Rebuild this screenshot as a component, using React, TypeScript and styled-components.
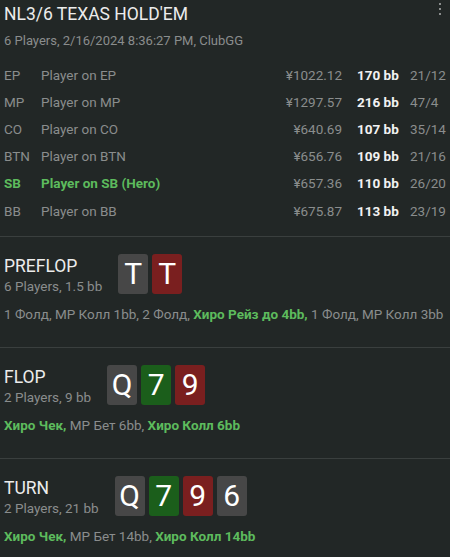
import styled, { createGlobalStyle } from "styled-components";

const GlobalStyle = createGlobalStyle`
  html, body {
    margin: 0;
    padding: 0;
    background: #222726;
  }
  body {
    font-family: Roboto, "Noto Sans", sans-serif;
    color: #e6e6e6;
  }
`;

const Page = styled.div`
  width: 450px;
  min-height: 557px;
  background: #222726;
  box-sizing: border-box;
`;

const Header = styled.header`
  position: relative;
  padding: 2px 4px 0 4px;
`;

const Title = styled.h1`
  margin: 0;
  font-size: 17.5px;
  font-weight: 400;
  line-height: 24px;
  color: #ececec;
`;

const Sub = styled.div`
  font-size: 13px;
  line-height: 18px;
  color: #8a8d8d;
  margin-top: 6px;
`;

const MenuButton = styled.button`
  position: absolute;
  top: 2px;
  right: 8px;
  border: 0;
  background: none;
  padding: 0;
  display: flex;
`;

const Players = styled.div`
  display: grid;
  grid-template-columns: 37px 1fr auto 68px 36px;
  grid-auto-rows: 27.2px;
  align-items: center;
  padding: 11px 4px 12px 4px;
  font-size: 13.5px;
`;

const Cell = styled.span<{ $hero?: boolean; $right?: boolean }>`
  color: ${(p) => (p.$hero ? "#5dbb5d" : "#8a8d8d")};
  font-weight: ${(p) => (p.$hero ? 700 : 400)};
  text-align: ${(p) => (p.$right ? "right" : "left")};
  white-space: nowrap;
`;

const BB = styled(Cell)`
  padding-left: 15px;
  color: #f2f2f2;
  font-weight: 700;
`;

const Street = styled.section`
  border-top: 1px solid #3a3f3e;
  padding: 17px 4px 24px 4px;
`;

const StreetHead = styled.div`
  display: flex;
  align-items: flex-start;
  gap: 16px;
`;

const StreetInfo = styled.div`
  display: flex;
  flex-direction: column;
  padding-top: 1px;
`;

const StreetName = styled.div`
  font-size: 17.5px;
  line-height: 22px;
  color: #ececec;
`;

const StreetSub = styled.div`
  font-size: 13.5px;
  line-height: 18px;
  color: #8a8d8d;
`;

const Cards = styled.div`
  display: flex;
  gap: 4px;
`;

const Card = styled.div<{ $suit: "g" | "r" | "n" }>`
  width: 30px;
  height: 40px;
  border-radius: 3px;
  background: ${(p) => (p.$suit === "r" ? "#7a1f1f" : p.$suit === "g" ? "#1b5e1b" : "#474747")};
  color: #ffffff;
  font-size: 30px;
  line-height: 40px;
  text-align: center;
`;

const Actions = styled.div`
  margin-top: 10px;
  font-size: 13.5px;
  line-height: 18px;
  color: #8a8d8d;
  white-space: nowrap;
`;

const Hero = styled.span`
  color: #5dbb5d;
  font-weight: 700;
`;

type Suit = "g" | "r" | "n";

interface IPlayer {
  pos: string;
  name: string;
  stack: string;
  bb: string;
  stat: string;
  hero?: boolean;
}

const players: IPlayer[] = [
  { pos: "EP", name: "Player on EP", stack: "¥1022.12", bb: "170 bb", stat: "21/12" },
  { pos: "MP", name: "Player on MP", stack: "¥1297.57", bb: "216 bb", stat: "47/4" },
  { pos: "CO", name: "Player on CO", stack: "¥640.69", bb: "107 bb", stat: "35/14" },
  { pos: "BTN", name: "Player on BTN", stack: "¥656.76", bb: "109 bb", stat: "21/16" },
  { pos: "SB", name: "Player on SB (Hero)", stack: "¥657.36", bb: "110 bb", stat: "26/20", hero: true },
  { pos: "BB", name: "Player on BB", stack: "¥675.87", bb: "113 bb", stat: "23/19" },
];

interface IStreet {
  name: string;
  sub: string;
  cards: [string, Suit][];
  actions: [string, boolean][];
}

const streets: IStreet[] = [
  {
    name: "PREFLOP",
    sub: "6 Players, 1.5 bb",
    cards: [
      ["T", "n"],
      ["T", "r"],
    ],
    actions: [
      ["1 Фолд, MP Колл 1bb, 2 Фолд, ", false],
      ["Хиро Рейз до 4bb,", true],
      [" 1 Фолд, MP Колл 3bb", false],
    ],
  },
  {
    name: "FLOP",
    sub: "2 Players, 9 bb",
    cards: [
      ["Q", "n"],
      ["7", "g"],
      ["9", "r"],
    ],
    actions: [
      ["Хиро Чек,", true],
      [" MP Бет 6bb, ", false],
      ["Хиро Колл 6bb", true],
    ],
  },
  {
    name: "TURN",
    sub: "2 Players, 21 bb",
    cards: [
      ["Q", "n"],
      ["7", "g"],
      ["9", "r"],
      ["6", "n"],
    ],
    actions: [
      ["Хиро Чек,", true],
      [" MP Бет 14bb, ", false],
      ["Хиро Колл 14bb", true],
    ],
  },
];

function App() {
  return (
    <Page>
      <GlobalStyle />
      <Header>
        <Title>NL3/6 TEXAS HOLD'EM</Title>
        <Sub>6 Players, 2/16/2024 8:36:27 PM, ClubGG</Sub>
        <MenuButton>
          <svg width="4" height="14" viewBox="0 0 4 14">
            <rect x="1" y="1" width="2" height="2" fill="#8a8d8d" />
            <rect x="1" y="6" width="2" height="2" fill="#8a8d8d" />
            <rect x="1" y="11" width="2" height="2" fill="#8a8d8d" />
          </svg>
        </MenuButton>
      </Header>
      <Players>
        {players.map((p) => [
          <Cell key={p.pos + "a"} $hero={p.hero}>
            {p.pos}
          </Cell>,
          <Cell key={p.pos + "b"} $hero={p.hero}>
            {p.name}
          </Cell>,
          <Cell key={p.pos + "c"} $right>
            {p.stack}
          </Cell>,
          <BB key={p.pos + "d"}>{p.bb}</BB>,
          <Cell key={p.pos + "e"}>{p.stat}</Cell>,
        ])}
      </Players>
      {streets.map((s) => (
        <Street key={s.name}>
          <StreetHead>
            <StreetInfo>
              <StreetName>{s.name}</StreetName>
              <StreetSub>{s.sub}</StreetSub>
            </StreetInfo>
            <Cards>
              {s.cards.map(([rank, suit], i) => (
                <Card key={i} $suit={suit}>
                  {rank}
                </Card>
              ))}
            </Cards>
          </StreetHead>
          <Actions>
            {s.actions.map(([text, hero], i) =>
              hero ? <Hero key={i}>{text}</Hero> : <span key={i}>{text}</span>
            )}
          </Actions>
        </Street>
      ))}
    </Page>
  );
}

export default App;
